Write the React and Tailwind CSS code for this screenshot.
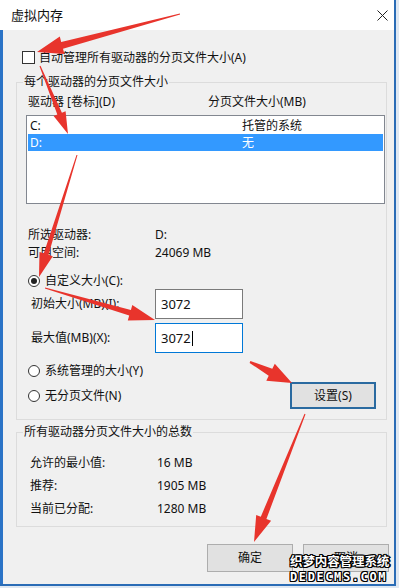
import React from "react";

const FONT = "font-['Noto_Sans','Noto_Sans_CJK_SC',sans-serif]";

function arrowPoints(x1, y1, x2, y2, hl, hw, sw0, sw1) {
  const dx = x2 - x1, dy = y2 - y1;
  const len = Math.hypot(dx, dy);
  const ux = dx / len, uy = dy / len;
  const nx = -uy, ny = ux;
  const bx = x2 - ux * hl, by = y2 - uy * hl;
  const p = [
    [x1 + (nx * sw0) / 2, y1 + (ny * sw0) / 2],
    [bx + (nx * sw1) / 2, by + (ny * sw1) / 2],
    [bx + (nx * hw) / 2, by + (ny * hw) / 2],
    [x2, y2],
    [bx - (nx * hw) / 2, by - (ny * hw) / 2],
    [bx - (nx * sw1) / 2, by - (ny * sw1) / 2],
    [x1 - (nx * sw0) / 2, y1 - (ny * sw0) / 2],
  ];
  return p.map((q) => q[0].toFixed(1) + "," + q[1].toFixed(1)).join(" ");
}

const ARROWS = [
  [180, 14, 37, 52, 26, 18, 1, 7],
  [40, 66, 68, 134, 22, 13, 1, 5],
  [77, 155, 39, 277, 24, 14, 1, 5],
  [45, 288, 155, 320, 26, 16, 1, 6],
  [250, 362, 292, 383, 24, 19, 2, 8],
  [305, 414, 254, 542, 26, 16, 1, 6],
];

function Radio({ checked }) {
  return (
    <div className="w-[12px] h-[12px] rounded-full border border-[#333] bg-white flex items-center justify-center shrink-0">
      {checked && <div className="w-[6px] h-[6px] rounded-full bg-[#222]" />}
    </div>
  );
}

export default function App() {
  return (
    <div className={`relative w-[399px] h-[588px] overflow-hidden bg-[#dfe8f2] text-[12px] leading-[16px] text-[#111] ${FONT}`}>
      <div className="w-[396px] h-[586px] flex flex-col border-r-2 border-b-2 border-[#2a6cb6]">
        {/* title bar */}
        <div className="h-[30px] bg-white flex items-center justify-between shrink-0">
          <span className="pl-[11px] text-[13px] text-[#111]">虚拟内存</span>
          <svg width="11" height="11" viewBox="0 0 11 11" className="mr-[6px]">
            <path d="M0.5 0.5 L10.5 10.5 M10.5 0.5 L0.5 10.5" stroke="#222" strokeWidth="1" />
          </svg>
        </div>
        {/* body */}
        <div className="flex-1 bg-[#f0f0f0] border-l-[3px] border-[#2b73c6] flex flex-col">
          {/* checkbox */}
          <div className="mt-[21px] ml-[19px] h-[13px] flex items-center">
            <div className="w-[13px] h-[13px] border border-[#333] bg-white shrink-0" />
            <span className="ml-[4px]">自动管理所有驱动器的分页文件大小(A)</span>
          </div>

          {/* group 1 */}
          <fieldset className="mt-[10px] ml-[13px] w-[371px] border border-[#dcdcdc] pb-[10px]">
            <legend className="ml-[6px] px-[1px]">每个驱动器的分页文件大小</legend>
            <div className="mt-[4px] h-[16px] flex">
              <span className="ml-[11px] w-[180px]">驱动器 [卷标](D)</span>
              <span>分页文件大小(MB)</span>
            </div>
            <div className="mt-[5px] ml-[9px] w-[359px] h-[89px] border border-[#828790] bg-white pt-[1px]">
              <div className="h-[17px] mx-[1px] flex items-center">
                <span className="pl-[2px] w-[214px]">C:</span>
                <span>托管的系统</span>
              </div>
              <div className="h-[17px] mx-[1px] flex items-center bg-[#3399ff] text-white">
                <span className="pl-[2px] w-[214px]">D:</span>
                <span>无</span>
              </div>
            </div>
            <div className="mt-[23px] h-[16px] flex">
              <span className="ml-[11px] w-[127px]">所选驱动器:</span>
              <span>D:</span>
            </div>
            <div className="mt-[2px] h-[16px] flex">
              <span className="ml-[11px] w-[127px]">可用空间:</span>
              <span>24069 MB</span>
            </div>
            <div className="mt-[12px] h-[16px] flex items-center ml-[11px]">
              <Radio checked />
              <span className="ml-[5px]">自定义大小(C):</span>
            </div>
            <div className="h-[30px] flex items-center">
              <span className="ml-[14px] w-[124px]">初始大小(MB)(I):</span>
              <div className="w-[88px] h-[30px] border border-[#7a7a7a] bg-white flex items-center pl-[5px] text-[13px]">3072</div>
            </div>
            <div className="mt-[4px] h-[30px] flex items-center">
              <span className="ml-[14px] w-[124px]">最大值(MB)(X):</span>
              <div className="w-[88px] h-[30px] border border-[#0078d7] bg-white flex items-center pl-[5px] text-[13px]">
                3072<span className="ml-[1px] w-[1px] h-[15px] bg-black" />
              </div>
            </div>
            <div className="mt-[10px] h-[16px] flex items-center ml-[11px]">
              <Radio />
              <span className="ml-[5px]">系统管理的大小(Y)</span>
            </div>
            <div className="mt-[3px] h-[27px] flex items-center justify-between">
              <div className="flex items-center ml-[11px]">
                <Radio />
                <span className="ml-[5px]">无分页文件(N)</span>
              </div>
              <div className="mr-[10px] w-[86px] h-[27px] border-2 border-[#2a6aa0] bg-[#e1e1e1] flex items-center justify-center">
                设置(S)
              </div>
            </div>
          </fieldset>

          {/* group 2 */}
          <fieldset className="mt-[4px] ml-[13px] w-[371px] border border-[#dcdcdc] pb-[9px]">
            <legend className="ml-[6px] px-[1px]">所有驱动器分页文件大小的总数</legend>
            <div className="mt-[15px] h-[16px] flex">
              <span className="ml-[13px] w-[127px]">允许的最小值:</span>
              <span>16 MB</span>
            </div>
            <div className="mt-[7px] h-[16px] flex">
              <span className="ml-[13px] w-[127px]">推荐:</span>
              <span>1905 MB</span>
            </div>
            <div className="mt-[7px] h-[16px] flex">
              <span className="ml-[13px] w-[127px]">当前已分配:</span>
              <span>1280 MB</span>
            </div>
          </fieldset>

          {/* buttons */}
          <div className="mt-[17px] ml-[204px] flex gap-[10px]">
            <div className="w-[86px] h-[28px] border border-[#adadad] bg-[#e1e1e1] flex items-center justify-center">确定</div>
            <div className="w-[86px] h-[28px] border border-[#adadad] bg-[#e1e1e1] flex items-center justify-center">取消</div>
          </div>
        </div>
      </div>

      {/* red annotation arrows */}
      <svg className="absolute left-0 top-0 pointer-events-none" width="399" height="588">
        {ARROWS.map((a, i) => (
          <polygon key={i} points={arrowPoints(...a)} fill="#e8342c" />
        ))}
      </svg>

      {/* watermark */}
      <div className="absolute left-[290px] top-[552px] flex flex-col items-start text-white font-bold">
        <span className="text-[12.5px] leading-[17px] tracking-[-0.1px] [text-shadow:1px_0_#000,-1px_0_#000,0_1px_#000,0_-1px_#000,1px_1px_#000,-1px_-1px_#000,1px_-1px_#000,-1px_1px_#000,2px_0_#000] font-['Noto_Sans_CJK_SC',sans-serif]">织梦内容管理系统</span>
        <span className="mt-[1px] text-[12px] leading-[14px] tracking-[1.6px] [text-shadow:1px_0_#000,-1px_0_#000,0_1px_#000,0_-1px_#000,1px_1px_#000,-1px_-1px_#000,1px_-1px_#000,-1px_1px_#000] font-['DejaVu_Sans_Mono',monospace]">DEDECMS.COM</span>
      </div>
    </div>
  );
}
